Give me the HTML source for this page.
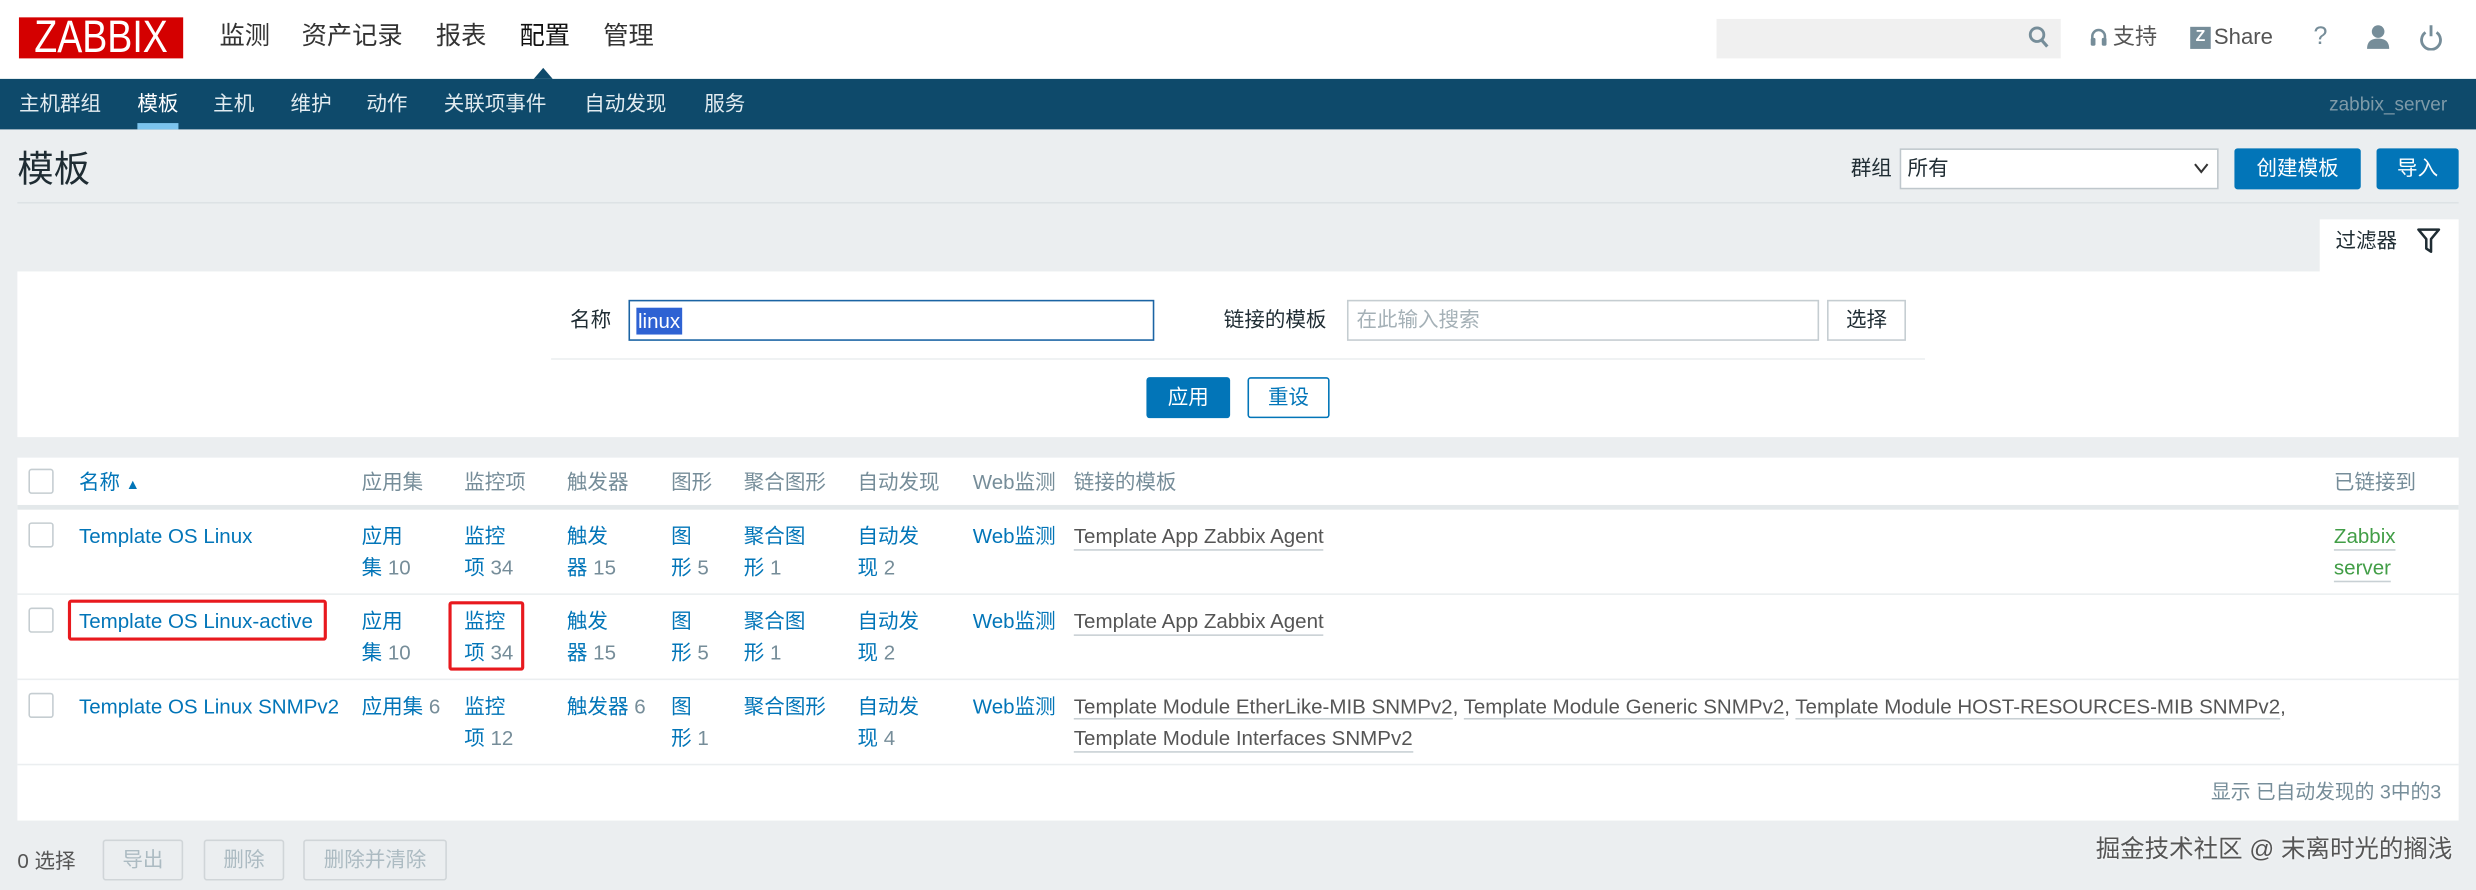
<!DOCTYPE html>
<html><head><meta charset="utf-8">
<style>
*{box-sizing:border-box;margin:0;padding:0}
html,body{width:2476px;height:890px;overflow:hidden;background:#ebeef0}
#w{position:absolute;left:0;top:0;width:1568px;height:564px;transform:scale(1.5791,1.578);transform-origin:0 0;background:#ebeef0;font-family:"Liberation Sans","Noto Sans CJK SC",sans-serif;font-size:13px;color:#1f2c33;line-height:1.2;overflow:hidden}
.a{position:absolute;white-space:nowrap}
.lk{color:#0275b8}
.gr{color:#768d99}
.tl{color:#555;border-bottom:1px solid #c8d0d4}
.btn{position:absolute;background:#0275b8;color:#fff;border-radius:2px;text-align:center;font-size:13px}
.dis{position:absolute;border:1px solid #d0d5d8;background:#ebeef0;color:#acbbc2;border-radius:2px;text-align:center;line-height:24px}
.cb{position:absolute;width:16px;height:16px;border:1px solid #c5cdd1;background:#fff;border-radius:2px}
.hr{position:absolute;height:1px;background:#ebeef0}
</style></head><body><div id="w">
<!-- header -->
<div class="a" style="left:0;top:0;width:1568px;height:50px;background:#fff"></div>
<div class="a" style="left:12px;top:11px;width:104px;height:26px;background:#d40000;overflow:hidden"><div style="color:#fff;font-size:29px;line-height:26px;width:104px;text-align:center;transform:scaleX(0.82)">ZABBIX</div></div>
<div class="a" style="left:139px;top:14px;font-size:16px;color:#333">监测</div>
<div class="a" style="left:191px;top:14px;font-size:16px;color:#333">资产记录</div>
<div class="a" style="left:276px;top:14px;font-size:16px;color:#333">报表</div>
<div class="a" style="left:329px;top:14px;font-size:16px;color:#111">配置</div>
<div class="a" style="left:382px;top:14px;font-size:16px;color:#333">管理</div>
<div class="a" style="left:338px;top:43px;width:0;height:0;border-left:6px solid transparent;border-right:6px solid transparent;border-bottom:7px solid #0e4a6b"></div>
<div class="a" style="left:1087px;top:12px;width:218px;height:25px;background:#f0f0f0"></div>
<svg class="a" style="left:1284px;top:16px" width="14" height="16" viewBox="0 0 14 16"><circle cx="6" cy="6" r="4.3" fill="none" stroke="#768d99" stroke-width="1.8"/><path d="M9 9.5l3.5 4" stroke="#768d99" stroke-width="2"/></svg>
<svg class="a" style="left:1323px;top:17px" width="12" height="14" viewBox="0 0 12 14"><path d="M2 9V6a4 4 0 0 1 8 0v3" fill="none" stroke="#768d99" stroke-width="1.6"/><rect x="1" y="7" width="3" height="5" rx="1" fill="#768d99"/><rect x="8" y="7" width="3" height="5" rx="1" fill="#768d99"/></svg>
<div class="a" style="left:1338px;top:15px;font-size:14px;color:#555">支持</div>
<div class="a" style="left:1387px;top:17px;width:13px;height:14px;background:#768d99;color:#fff;font-size:10px;font-weight:bold;text-align:center;line-height:14px">Z</div>
<div class="a" style="left:1402px;top:15px;font-size:14px;color:#555">Share</div>
<div class="a" style="left:1465px;top:14px;font-size:16px;color:#768d99">?</div>
<svg class="a" style="left:1498px;top:15px" width="16" height="17" viewBox="0 0 16 17"><circle cx="8" cy="5" r="4" fill="#768d99"/><path d="M1 16c0-5 3-6.5 7-6.5s7 1.5 7 6.5z" fill="#768d99"/></svg>
<svg class="a" style="left:1532px;top:15px" width="15" height="17" viewBox="0 0 15 17"><path d="M4 5.5a6 6 0 1 0 7 0" fill="none" stroke="#768d99" stroke-width="1.8"/><path d="M7.5 1v7" stroke="#768d99" stroke-width="1.8"/></svg>
<!-- subnav -->
<div class="a" style="left:0;top:50px;width:1568px;height:32px;background:#0e4a6b"></div>
<div class="a" style="left:12px;top:58px;color:#e2ecf1">主机群组</div>
<div class="a" style="left:87px;top:58px;color:#fff">模板</div>
<div class="a" style="left:87px;top:78px;width:26px;height:4px;background:#7bc4ee"></div>
<div class="a" style="left:135px;top:58px;color:#e2ecf1">主机</div>
<div class="a" style="left:184px;top:58px;color:#e2ecf1">维护</div>
<div class="a" style="left:232px;top:58px;color:#e2ecf1">动作</div>
<div class="a" style="left:281px;top:58px;color:#e2ecf1">关联项事件</div>
<div class="a" style="left:370px;top:58px;color:#e2ecf1">自动发现</div>
<div class="a" style="left:446px;top:58px;color:#e2ecf1">服务</div>
<div class="a" style="left:1475px;top:59px;color:#7e9aa8;font-size:12px">zabbix_server</div>
<!-- title -->
<div class="a" style="left:11px;top:94px;font-size:23px;color:#1f2c33">模板</div>
<div class="a" style="left:11px;top:128px;width:1546px;height:1px;background:#dde2e5"></div>
<div class="a" style="left:1172px;top:99px">群组</div>
<div class="a" style="left:1203px;top:94px;width:202px;height:26px;background:#fff;border:1px solid #bfc7cc"></div>
<div class="a" style="left:1208px;top:99px">所有</div>
<svg class="a" style="left:1389px;top:103px" width="10" height="8" viewBox="0 0 10 8"><path d="M1 1l4 5 4-5" fill="none" stroke="#333" stroke-width="1.3"/></svg>
<div class="btn" style="left:1415px;top:94px;width:80px;height:26px;line-height:26px">创建模板</div>
<div class="btn" style="left:1505px;top:94px;width:52px;height:26px;line-height:26px">导入</div>
<!-- filter -->
<div class="a" style="left:1469px;top:139px;width:88px;height:34px;background:#fff"></div>
<div class="a" style="left:1479px;top:145px">过滤器</div>
<svg class="a" style="left:1530px;top:144px" width="16" height="17" viewBox="0 0 16 17"><path d="M1.5 1.5h13l-5 6v8l-3-2v-6z" fill="none" stroke="#1f2c33" stroke-width="1.6" stroke-linejoin="round"/></svg>
<div class="a" style="left:11px;top:172px;width:1546px;height:105px;background:#fff"></div>
<div class="a" style="left:361px;top:195px">名称</div>
<div class="a" style="left:398px;top:190px;width:333px;height:26px;background:#fff;border:1px solid #1b64a4"></div>
<div class="a" style="left:403px;top:195px;background:#2e62d3;color:#fff;padding:0 1px;line-height:17px">linux</div>
<div class="a" style="left:775px;top:195px">链接的模板</div>
<div class="a" style="left:853px;top:190px;width:299px;height:26px;background:#fff;border:1px solid #c5cdd1"></div>
<div class="a" style="left:859px;top:195px;color:#a5b1b7">在此输入搜索</div>
<div class="a" style="left:1157px;top:190px;width:50px;height:26px;background:#fff;border:1px solid #c5cdd1;text-align:center;line-height:24px">选择</div>
<div class="a" style="left:349px;top:227px;width:870px;height:1px;background:#ebeef0"></div>
<div class="btn" style="left:726px;top:239px;width:53px;height:26px;line-height:26px">应用</div>
<div class="a" style="left:790px;top:239px;width:52px;height:26px;border:1px solid #0275b8;border-radius:2px;color:#0275b8;text-align:center;line-height:24px;background:#fff">重设</div>
<!-- table -->
<div class="a" style="left:11px;top:290px;width:1546px;height:230px;background:#fff"></div>
<div class="a" style="left:11px;top:320px;width:1546px;height:3px;background:#e3e8ea"></div>
<div class="cb" style="left:18px;top:297px"></div>
<div class="a lk" style="left:50px;top:298px">名称 <span style="font-size:9px">▲</span></div>
<div class="a gr" style="left:229px;top:298px">应用集</div>
<div class="a gr" style="left:294px;top:298px">监控项</div>
<div class="a gr" style="left:359px;top:298px">触发器</div>
<div class="a gr" style="left:425px;top:298px">图形</div>
<div class="a gr" style="left:471px;top:298px">聚合图形</div>
<div class="a gr" style="left:543px;top:298px">自动发现</div>
<div class="a gr" style="left:616px;top:298px">Web监测</div>
<div class="a gr" style="left:680px;top:298px">链接的模板</div>
<div class="a gr" style="left:1478px;top:298px">已链接到</div>
<div class="hr" style="left:11px;top:376px;width:1546px"></div>
<div class="hr" style="left:11px;top:430px;width:1546px"></div>
<div class="hr" style="left:11px;top:484px;width:1546px"></div>
<!-- row1 -->
<div class="cb" style="left:18px;top:331px"></div>
<div class="a lk" style="left:50px;top:332px">Template OS Linux</div>
<div class="a lk" style="left:229px;top:330px;line-height:20px">应用<br>集 <span class="gr">10</span></div>
<div class="a lk" style="left:294px;top:330px;line-height:20px">监控<br>项 <span class="gr">34</span></div>
<div class="a lk" style="left:359px;top:330px;line-height:20px">触发<br>器 <span class="gr">15</span></div>
<div class="a lk" style="left:425px;top:330px;line-height:20px">图<br>形 <span class="gr">5</span></div>
<div class="a lk" style="left:471px;top:330px;line-height:20px">聚合图<br>形 <span class="gr">1</span></div>
<div class="a lk" style="left:543px;top:330px;line-height:20px">自动发<br>现 <span class="gr">2</span></div>
<div class="a lk" style="left:616px;top:332px">Web监测</div>
<div class="a tl" style="left:680px;top:332px">Template App Zabbix Agent</div>
<div class="a" style="left:1478px;top:332px;color:#429e47;border-bottom:1px solid #c8d0d4">Zabbix</div>
<div class="a" style="left:1478px;top:352px;color:#429e47;border-bottom:1px solid #c8d0d4">server</div>
<!-- row2 -->
<div class="cb" style="left:18px;top:385px"></div>
<div class="a lk" style="left:50px;top:386px">Template OS Linux-active</div>
<div class="a" style="left:43px;top:380px;width:164px;height:26px;border:2px solid #e8191e;border-radius:2px"></div>
<div class="a lk" style="left:229px;top:384px;line-height:20px">应用<br>集 <span class="gr">10</span></div>
<div class="a lk" style="left:294px;top:384px;line-height:20px">监控<br>项 <span class="gr">34</span></div>
<div class="a" style="left:284px;top:381px;width:48px;height:44px;border:2px solid #e8191e;border-radius:2px"></div>
<div class="a lk" style="left:359px;top:384px;line-height:20px">触发<br>器 <span class="gr">15</span></div>
<div class="a lk" style="left:425px;top:384px;line-height:20px">图<br>形 <span class="gr">5</span></div>
<div class="a lk" style="left:471px;top:384px;line-height:20px">聚合图<br>形 <span class="gr">1</span></div>
<div class="a lk" style="left:543px;top:384px;line-height:20px">自动发<br>现 <span class="gr">2</span></div>
<div class="a lk" style="left:616px;top:386px">Web监测</div>
<div class="a tl" style="left:680px;top:386px">Template App Zabbix Agent</div>
<!-- row3 -->
<div class="cb" style="left:18px;top:439px"></div>
<div class="a lk" style="left:50px;top:440px">Template OS Linux SNMPv2</div>
<div class="a lk" style="left:229px;top:440px">应用集 <span class="gr">6</span></div>
<div class="a lk" style="left:294px;top:438px;line-height:20px">监控<br>项 <span class="gr">12</span></div>
<div class="a lk" style="left:359px;top:440px">触发器 <span class="gr">6</span></div>
<div class="a lk" style="left:425px;top:438px;line-height:20px">图<br>形 <span class="gr">1</span></div>
<div class="a lk" style="left:471px;top:440px">聚合图形</div>
<div class="a lk" style="left:543px;top:438px;line-height:20px">自动发<br>现 <span class="gr">4</span></div>
<div class="a lk" style="left:616px;top:440px">Web监测</div>
<div class="a" style="left:680px;top:440px;color:#555"><span class="tl">Template Module EtherLike-MIB SNMPv2</span>, <span class="tl">Template Module Generic SNMPv2</span>, <span class="tl">Template Module HOST-RESOURCES-MIB SNMPv2</span>,</div>
<div class="a tl" style="left:680px;top:460px">Template Module Interfaces SNMPv2</div>
<div class="a gr" style="right:22px;top:495px;font-size:12.5px">显示 已自动发现的 3中的3</div>
<!-- bottom -->
<div class="a" style="left:11px;top:538px;color:#555">0 选择</div>
<div class="dis" style="left:65px;top:532px;width:51px;height:26px">导出</div>
<div class="dis" style="left:129px;top:532px;width:51px;height:26px">删除</div>
<div class="dis" style="left:192px;top:532px;width:91px;height:26px">删除并清除</div>
<div class="a" style="right:15px;top:530px;font-size:15.5px;color:#555;text-shadow:0 0 2px #fff">掘金技术社区 @ 末离时光的搁浅</div>
</div></body></html>
